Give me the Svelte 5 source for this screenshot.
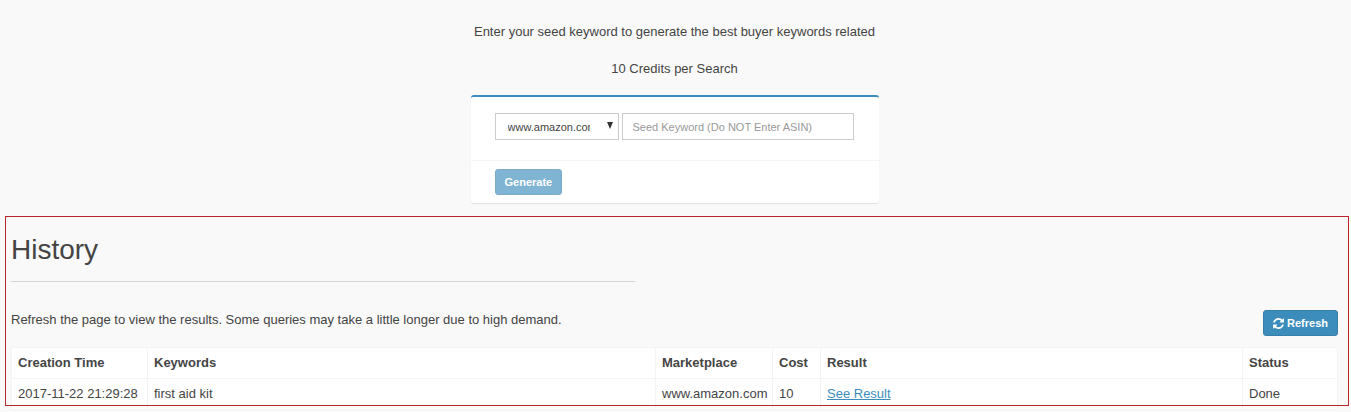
<script>
  let marketplace = $state('www.amazon.com');
  let keyword = $state('');
  const markets = ['www.amazon.com', 'www.amazon.co.uk', 'www.amazon.de'];
  const rows = [
    { time: '2017-11-22 21:29:28', keywords: 'first aid kit', market: 'www.amazon.com', cost: 10, status: 'Done' }
  ];
</script>

<main>
  <header class="intro">
    <p>Enter your seed keyword to generate the best buyer keywords related</p>
    <p>10 Credits per Search</p>
  </header>

  <form class="box" onsubmit={(e) => e.preventDefault()}>
    <div class="fields">
      <div class="picker">
        <select aria-label="Marketplace" bind:value={marketplace}>
          {#each markets as m}
            <option value={m}>{m}</option>
          {/each}
        </select>
        <svg class="arrow" width="6" height="7" viewBox="0 0 6 7" aria-hidden="true"><path d="M0 0h6L3 7z" fill="#333" /></svg>
      </div>
      <input type="text" aria-label="Seed keyword" placeholder="Seed Keyword (Do NOT Enter ASIN)" bind:value={keyword} />
    </div>
    <div class="actions">
      <button type="submit" class="btn" disabled={!keyword}>Generate</button>
    </div>
  </form>

  <section class="history">
    <h1>History</h1>
    <hr />
    <div class="bar">
      <p>Refresh the page to view the results. Some queries may take a little longer due to high demand.</p>
      <button type="button" class="btn">
        <svg width="11" height="11" viewBox="0 0 1536 1536" aria-hidden="true">
          <path fill="currentColor" d="M1511 928q0 5-1 7-64 268-268 434.500T764 1536q-146 0-282.500-55T238 1324l-129 129q-19 19-45 19t-45-19-19-45V960q0-26 19-45t45-19h448q26 0 45 19t19 45-19 45l-137 137q71 66 161 102t187 36q134 0 250-65t186-179q11-17 53-117 8-23 30-23h192q13 0 22.500 9.500t9.500 22.500zm25-800v448q0 26-19 45t-45 19h-448q-26 0-45-19t-19-45 19-45l138-138Q969 256 768 256q-134 0-250 65T332 500q-11 17-53 117-8 23-30 23H50q-13 0-22.500-9.500T18 608v-7q65-268 270-434.500T768 0q146 0 284 55.500T1297 212l130-129q19-19 45-19t45 19 19 45z" />
        </svg>
        Refresh
      </button>
    </div>
    <table>
      <colgroup>
        <col class="c-time" /><col class="c-words" /><col class="c-market" /><col class="c-cost" /><col /><col class="c-status" />
      </colgroup>
      <thead>
        <tr><th>Creation Time</th><th>Keywords</th><th>Marketplace</th><th>Cost</th><th>Result</th><th>Status</th></tr>
      </thead>
      <tbody>
        {#each rows as r}
          <tr>
            <td>{r.time}</td><td>{r.keywords}</td><td>{r.market}</td><td>{r.cost}</td>
            <td><a href="#result">See Result</a></td><td>{r.status}</td>
          </tr>
        {/each}
      </tbody>
    </table>
    <div class="outline" aria-hidden="true"></div>
  </section>
</main>

<style>
  :global(body) {
    background: #f9f9f9;
    color: #444;
    font: 13px/19px "Liberation Sans", Arial, sans-serif;
  }
  * { box-sizing: border-box; }
  p { margin: 0; }
  main { padding: 22px 2px 0 0; }
  .intro {
    display: grid;
    gap: 18px;
    text-align: center;
  }
  .box {
    max-width: 408px;
    margin: 17px auto 0;
    background: #fff;
    border-top: 2px solid #3c8dbc;
    border-radius: 3px;
    box-shadow: 0 1px 1px rgba(0, 0, 0, 0.1);
  }
  .fields {
    display: flex;
    gap: 3px;
    padding: 16px 25px 20px 24px;
  }
  .picker { position: relative; flex: 0 0 124px; }
  select, input {
    display: block;
    width: 100%;
    height: 27px;
    margin: 0;
    border: 1px solid #ccc;
    border-radius: 0;
    background: #fff;
    color: #444;
    font: 11px/16px "Liberation Sans", Arial, sans-serif;
  }
  select { appearance: none; padding: 0 28px 0 12px; text-overflow: clip; }
  .arrow { position: absolute; right: 6px; top: 9px; pointer-events: none; }
  input { flex: 1; min-width: 0; padding: 0 10px; }
  input::placeholder { color: #999; opacity: 1; }
  .actions {
    padding: 8px 24px;
    border-top: 1px solid #f4f4f4;
  }
  .btn {
    display: inline-flex;
    align-items: center;
    gap: 3px;
    height: 26px;
    padding: 0 9px;
    border: 1px solid #367fa9;
    border-radius: 3px;
    background: #3c8dbc;
    color: #fff;
    font: bold 11px/16px "Liberation Sans", Arial, sans-serif;
  }
  .btn:disabled { opacity: 0.65; }
  .actions .btn { display: flex; }
  .history {
    position: relative;
    margin: 13px 0 0 5px;
    padding: 17px 11px 0 6px;
  }
  h1 { margin: 0; font-size: 28px; line-height: 34px; font-weight: 400; }
  hr { width: 47%; margin: 14px 0 28px; border: 0; border-top: 1px solid #d4d4d4; }
  .bar {
    display: flex;
    justify-content: space-between;
    align-items: flex-start;
    margin-bottom: 11px;
  }
  table {
    width: 100%;
    table-layout: fixed;
    border-collapse: collapse;
    background: #fff;
  }
  th, td {
    padding: 5px 6px 6px;
    border: 1px solid #f4f4f4;
    text-align: left;
    white-space: nowrap;
  }
  .c-time { width: 136px; }
  .c-words { width: 508px; }
  .c-market { width: 117px; }
  .c-cost { width: 48px; }
  .c-status { width: 95px; }
  a { color: #3c8dbc; text-decoration: underline; }
  .outline {
    position: absolute;
    inset: 0 0 4px;
    border: 1px solid #b8252b;
    pointer-events: none;
  }
</style>
